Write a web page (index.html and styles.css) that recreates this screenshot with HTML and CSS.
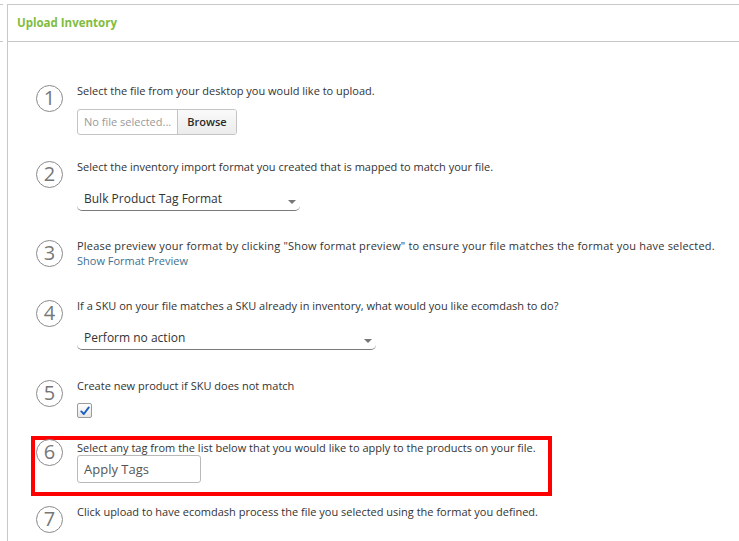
FILE: index.html
```html
<!DOCTYPE html>
<html>
<head>
<meta charset="utf-8">
<link rel="stylesheet" href="styles.css">
</head>
<body>
<div class="page">
  <div class="stub"></div>
  <div class="panel">
    <div class="panel-head"><h1 class="title">Upload Inventory</h1></div>
    <div class="panel-body">
      <div class="step step-1">
        <div class="num">1</div>
        <div class="content">
          <p class="label">Select the file from your desktop you would like to upload.</p>
          <div class="file">
            <span class="file-name">No file selected...</span>
            <span class="file-btn">Browse</span>
          </div>
        </div>
      </div>

      <div class="step step-2">
        <div class="num">2</div>
        <div class="content">
          <p class="label">Select the inventory import format you created that is mapped to match your file.</p>
          <div class="select select-narrow"><span>Bulk Product Tag Format</span><i class="caret"></i></div>
        </div>
      </div>

      <div class="step step-3">
        <div class="num">3</div>
        <div class="content">
          <p class="label label-wide">Please preview your format by clicking "Show format preview" to ensure your file matches the format you have selected.</p>
          <a class="link">Show Format Preview</a>
        </div>
      </div>

      <div class="step step-4">
        <div class="num">4</div>
        <div class="content">
          <p class="label">If a SKU on your file matches a SKU already in inventory, what would you like ecomdash to do?</p>
          <div class="select select-wide"><span>Perform no action</span><i class="caret"></i></div>
        </div>
      </div>

      <div class="step step-5">
        <div class="num">5</div>
        <div class="content">
          <p class="label">Create new product if SKU does not match</p>
          <span class="check">
            <svg width="10" height="10" viewBox="0 0 10 10"><path d="M1.3 5.4 L3.8 8 L8.8 1.4" fill="none" stroke="#1d5fc0" stroke-width="1.9" stroke-linecap="round" stroke-linejoin="round"/></svg>
          </span>
        </div>
      </div>

      <div class="highlight">
        <div class="step step-6">
          <div class="num">6</div>
          <div class="content">
            <p class="label">Select any tag from the list below that you would like to apply to the products on your file.</p>
            <div class="tags">Apply Tags</div>
          </div>
        </div>
      </div>

      <div class="step step-7">
        <div class="num">7</div>
        <div class="content">
          <p class="label">Click upload to have ecomdash process the file you selected using the format you defined.</p>
        </div>
      </div>
    </div>
  </div>
</div>
</body>
</html>
```

FILE: styles.css
```css
* { box-sizing: border-box; }
html, body { margin: 0; padding: 0; background: #fff; }
body {
  font-family: "Open Sans", "DejaVu Sans", sans-serif;
  color: #333;
  overflow: hidden;
  height: 541px;
}
.page {
  display: flex;
  align-items: flex-start;
  gap: 4px;
  padding-top: 4px;
}
.stub {
  width: 3px;
  height: 38px;
  border-top: 1px solid #c8c8c8;
  border-bottom: 1px solid #c8c8c8;
}
.panel {
  flex: 1;
  border-top: 1px solid #c8c8c8;
  border-left: 1px solid #c8c8c8;
  height: 537px;
  overflow: hidden;
}
.panel-head {
  height: 37px;
  border-bottom: 1px solid #c8c8c8;
  padding: 10px 0 0 9px;
}
.title {
  margin: 0;
  font-size: 11.5px;
  font-weight: 700;
  color: #80bd3e;
  line-height: 16px;
}
.panel-body {
  padding: 41px 0 0 28px;
}
.step {
  display: flex;
  align-items: flex-start;
  gap: 14px;
}
.num {
  flex: none;
  width: 27px;
  height: 27px;
  margin-top: 2px;
  border: 1.7px solid #8a8a8a;
  border-radius: 50%;
  color: #777;
  font-size: 20px;
  font-weight: 400;
  line-height: 23px;
  text-align: center;
}
.label {
  margin: 0;
  font-size: 11px;
  line-height: 15px;
  color: #333;
}
.label-wide { letter-spacing: 0.2px; }
.step-1 { margin-bottom: 24px; }
.step-2 { margin-bottom: 27px; }
.step-3 { margin-bottom: 30px; }
.step-4 { margin-bottom: 28px; }
.step-5 { margin-bottom: 18px; }

.file {
  display: flex;
  width: 160px;
  height: 26px;
  margin-top: 11px;
  border: 1px solid #c4c4c4;
  border-radius: 3px;
  overflow: hidden;
  font-size: 11px;
}
.file-name {
  flex: 1;
  padding-left: 6px;
  line-height: 24px;
  color: #9a9a9a;
}
.file-btn {
  width: 59px;
  border-left: 1px solid #c4c4c4;
  background: linear-gradient(#fafafa, #ececec);
  text-align: center;
  line-height: 24px;
  font-weight: 600;
  color: #2a2a2a;
}

.select {
  position: relative;
  margin-top: 17px;
  height: 20px;
  padding-left: 7px;
  border-bottom: 1.5px solid #7a7a7a;
  border-radius: 0 0 5px 5px;
  font-size: 12px;
  line-height: 16px;
  color: #333;
}
.select-narrow { width: 223px; }
.select-wide { width: 299px; }
.caret {
  position: absolute;
  right: 4px;
  top: 9px;
  width: 0;
  height: 0;
  border-left: 4px solid transparent;
  border-right: 4px solid transparent;
  border-top: 4px solid #777;
}

.link {
  display: block;
  font-size: 11px;
  line-height: 15px;
  color: #3f6f8e;
}

.check {
  display: flex;
  align-items: center;
  justify-content: center;
  width: 15px;
  height: 15px;
  margin-top: 10px;
  border: 1px solid #9a9a9a;
  border-radius: 2px;
  background: linear-gradient(#ffffff, #e6e6e6);
}

.highlight {
  margin: 0 0 8px -5px;
  width: 521px;
  height: 60px;
  padding: 0 0 0 1px;
  border: 4px solid #ff0000;
}
.highlight .num { margin-top: -1px; }
.tags {
  width: 124px;
  height: 28px;
  border: 1px solid #b9b9b9;
  border-radius: 3px;
  padding-left: 6px;
  font-size: 13px;
  line-height: 26px;
  color: #555;
}
```
